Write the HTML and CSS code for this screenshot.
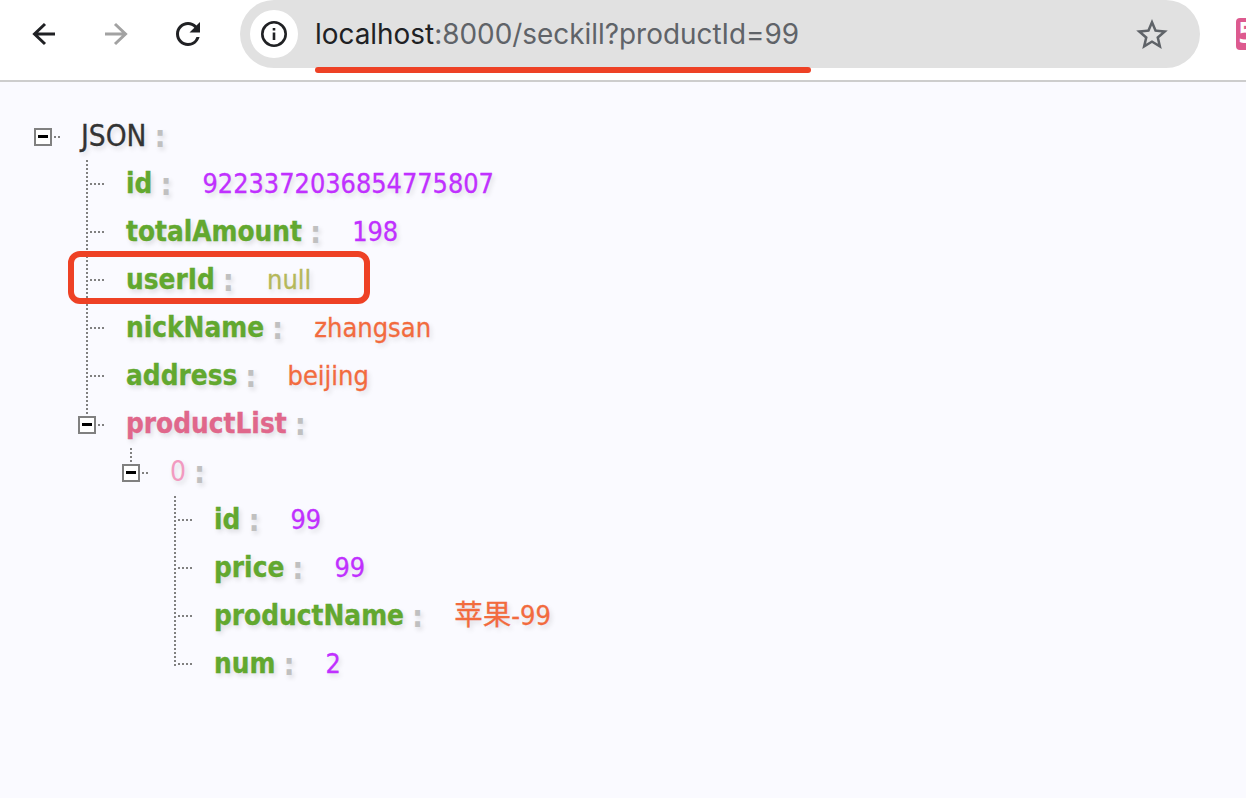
FILE: index.html
```html
<!DOCTYPE html>
<html lang="zh">
<head>
<meta charset="utf-8">
<title>JSON</title>
<link rel="stylesheet" href="styles.css">
</head>
<body>
<header class="toolbar">
  <svg class="nav" viewBox="0 0 24 24"><path d="M23 12H2M13 2 2.500 12 13 22"/></svg>
  <svg class="nav nav-off" viewBox="0 0 24 24"><path d="M1 12h21M11 2l10.500 10L11 22"/></svg>
  <svg class="nav-fill" viewBox="4 4 16 16"><path d="M17.650 6.350A7.958 7.958 0 0 0 12 4c-4.420 0-7.990 3.580-7.990 8s3.570 8 7.990 8c3.730 0 6.840-2.550 7.730-6h-2.080A5.990 5.990 0 0 1 12 18c-3.310 0-6-2.690-6-6s2.690-6 6-6c1.660 0 3.140.690 4.220 1.780L13 11h7V4l-2.350 2.350z"/></svg>
  <div class="omnibox">
    <span class="site-chip">
      <svg class="info" viewBox="0 0 26 26"><circle cx="13" cy="13" r="11.700"/><path d="M13 11.500v7.500M13 7v2.600"/></svg>
    </span>
    <span class="url"><span class="host">localhost</span>:8000/seckill?productId=99</span>
    <svg class="star" viewBox="2 2 20 19"><path d="M22 9.240l-7.190-.620L12 2 9.190 8.630 2 9.240l5.460 4.730L5.820 21 12 17.270 18.180 21l-1.630-7.030L22 9.240zM12 15.400l-3.760 2.270 1-4.280-3.320-2.880 4.380-.380L12 6.100l1.710 4.040 4.380.380-3.320 2.880 1 4.280L12 15.400z"/></svg>
  </div>
  <span class="ext">5</span>
  <div class="url-mark"></div>
</header>
<main class="page">
  <ul class="tree">
    <li>
      <div class="row"><span class="toggle"></span><span class="dots"></span><span class="root-key">JSON</span><span class="colon">:</span></div>
      <ul class="children">
        <li class="leaf"><div class="row"><span class="key">id</span><span class="colon">:</span><span class="val num-val">9223372036854775807</span></div></li>
        <li class="leaf"><div class="row"><span class="key">totalAmount</span><span class="colon">:</span><span class="val num-val">198</span></div></li>
        <li class="leaf"><div class="row"><span class="key">userId</span><span class="colon">:</span><span class="val null-val">null</span></div></li>
        <li class="leaf"><div class="row"><span class="key">nickName</span><span class="colon">:</span><span class="val str-val">zhangsan</span></div></li>
        <li class="leaf"><div class="row"><span class="key">address</span><span class="colon">:</span><span class="val str-val">beijing</span></div></li>
        <li class="branch-last">
          <div class="row"><span class="toggle"></span><span class="dots"></span><span class="key arr-key">productList</span><span class="colon">:</span></div>
          <ul class="children">
            <li class="branch-last">
              <div class="row"><span class="toggle"></span><span class="dots"></span><span class="idx-key">0</span><span class="colon">:</span></div>
              <ul class="children">
                <li class="leaf"><div class="row"><span class="key">id</span><span class="colon">:</span><span class="val num-val">99</span></div></li>
                <li class="leaf"><div class="row"><span class="key">price</span><span class="colon">:</span><span class="val num-val">99</span></div></li>
                <li class="leaf"><div class="row"><span class="key">productName</span><span class="colon">:</span><span class="val str-val"><span class="cjk">苹果</span>-99</span></div></li>
                <li class="leaf leaf-last"><div class="row"><span class="key">num</span><span class="colon">:</span><span class="val num-val">2</span></div></li>
              </ul>
            </li>
          </ul>
        </li>
      </ul>
    </li>
  </ul>
  <div class="highlight"></div>
</main>
</body>
</html>
```
FILE: styles.css
```css
* { box-sizing: border-box; }
html, body { margin: 0; height: 100%; }
body {
  overflow: hidden;
  background: #fafaff;
  font-family: "DejaVu Sans", "Noto Sans CJK SC", sans-serif;
  font-stretch: condensed;
}
.toolbar {
  position: relative;
  display: flex;
  align-items: flex-start;
  height: 82px;
  padding-left: 32px;
  background: #fff;
  border-bottom: 2px solid #cdcdcd;
  overflow: hidden;
}
.nav, .nav-fill {
  flex: none;
  width: 24px;
  height: 24px;
  margin: 22px 48px 0 0;
}
.nav path { fill: none; stroke: #202124; stroke-width: 3; }
.nav-off path { stroke: #a2a2a2; }
.nav-fill { margin-right: 40px; fill: #202124; }
.omnibox {
  flex: none;
  display: flex;
  align-items: center;
  width: 960px;
  height: 68px;
  padding: 0 32px 0 10px;
  background: #e1e1e1;
  border-radius: 34px;
}
.site-chip {
  flex: none;
  display: flex;
  align-items: center;
  justify-content: center;
  width: 48px;
  height: 48px;
  background: #fff;
  border-radius: 50%;
}
.info { width: 26px; height: 26px; }
.info circle, .info path { fill: none; stroke: #202124; stroke-width: 2.600; }
.url {
  flex: 1;
  margin-left: 17px;
  font-family: Inter, Roboto, sans-serif;
  font-stretch: normal;
  font-size: 27.900px;
  color: #5f6368;
}
.host { color: #202124; }
.star { flex: none; width: 32px; height: 30px; fill: #5f6368; }
.ext {
  flex: none;
  width: 30px;
  height: 32px;
  margin: 18px 0 0 36px;
  padding-left: 2px;
  background: #dd5a8f;
  border-radius: 4px;
  color: #fff;
  font: bold 28px/32px "DejaVu Sans Mono", monospace;
}
.url-mark {
  position: absolute;
  left: 315px;
  top: 67px;
  width: 496px;
  height: 6px;
  background: #ee4125;
  border-radius: 3px;
}
.page {
  position: relative;
  height: 716px;
  padding: 29px 0 0 34px;
}
ul { list-style: none; margin: 0; padding: 0; }
.tree { font-size: 27px; }
.children { margin-left: 44px; }
.children > li { position: relative; }
.children > li::before {
  content: "";
  position: absolute;
  left: 8px;
  top: 1px;
  bottom: 0;
  width: 2px;
  background: repeating-linear-gradient(to bottom, #808080 0 2px, transparent 2px 4px);
}
.children > .branch-last::before { bottom: auto; height: 16px; }
.children > .leaf-last::before { bottom: auto; height: 26px; }
.leaf::after {
  content: "";
  position: absolute;
  left: 10px;
  top: 24px;
  width: 16px;
  height: 2px;
  background: repeating-linear-gradient(to left, #808080 0 2px, transparent 2px 4px);
}
.row {
  display: flex;
  align-items: center;
  height: 48px;
  padding-top: 2px;
  line-height: 32px;
  white-space: nowrap;
  text-shadow: 2px 3px 5px rgba(0, 0, 0, .13);
}
.leaf > .row { padding-left: 48px; }
.toggle {
  position: relative;
  flex: none;
  width: 18px;
  height: 18px;
  margin-top: 2px;
  background: #fff;
  border: 2px solid #808080;
}
.toggle::after {
  content: "";
  position: absolute;
  left: 2px;
  top: 5px;
  width: 10px;
  height: 3px;
  background: #000;
}
.dots {
  flex: none;
  width: 6px;
  height: 2px;
  margin: 2px 22px 0 2px;
  background: repeating-linear-gradient(to left, #808080 0 2px, transparent 2px 4px);
}
.root-key { margin-left: -1px; color: #333; font-size: 29.500px; -webkit-text-stroke: .3px #333; }
.key { color: #62a82f; font-weight: 700; font-size: 27.700px; -webkit-text-stroke: .3px currentColor; }
.arr-key { color: #e0678b; }
.idx-key { color: #f29ac0; font-size: 28px; }
.colon { margin-left: 8px; color: #c0c0c0; font-weight: 700; font-size: 31px; }
.val { margin-left: 31px; -webkit-text-stroke: .3px currentColor; }
.num-val { color: #c030ff; font-size: 26.800px; }
.str-val { color: #f26b3e; }
.null-val { margin-left: 33px; color: #b5b85a; }
.cjk { font-size: 28.500px; line-height: 0; }
.highlight {
  position: absolute;
  left: 68px;
  top: 169px;
  width: 302px;
  height: 53px;
  border: 6px solid #ee4125;
  border-radius: 12px;
}
```
